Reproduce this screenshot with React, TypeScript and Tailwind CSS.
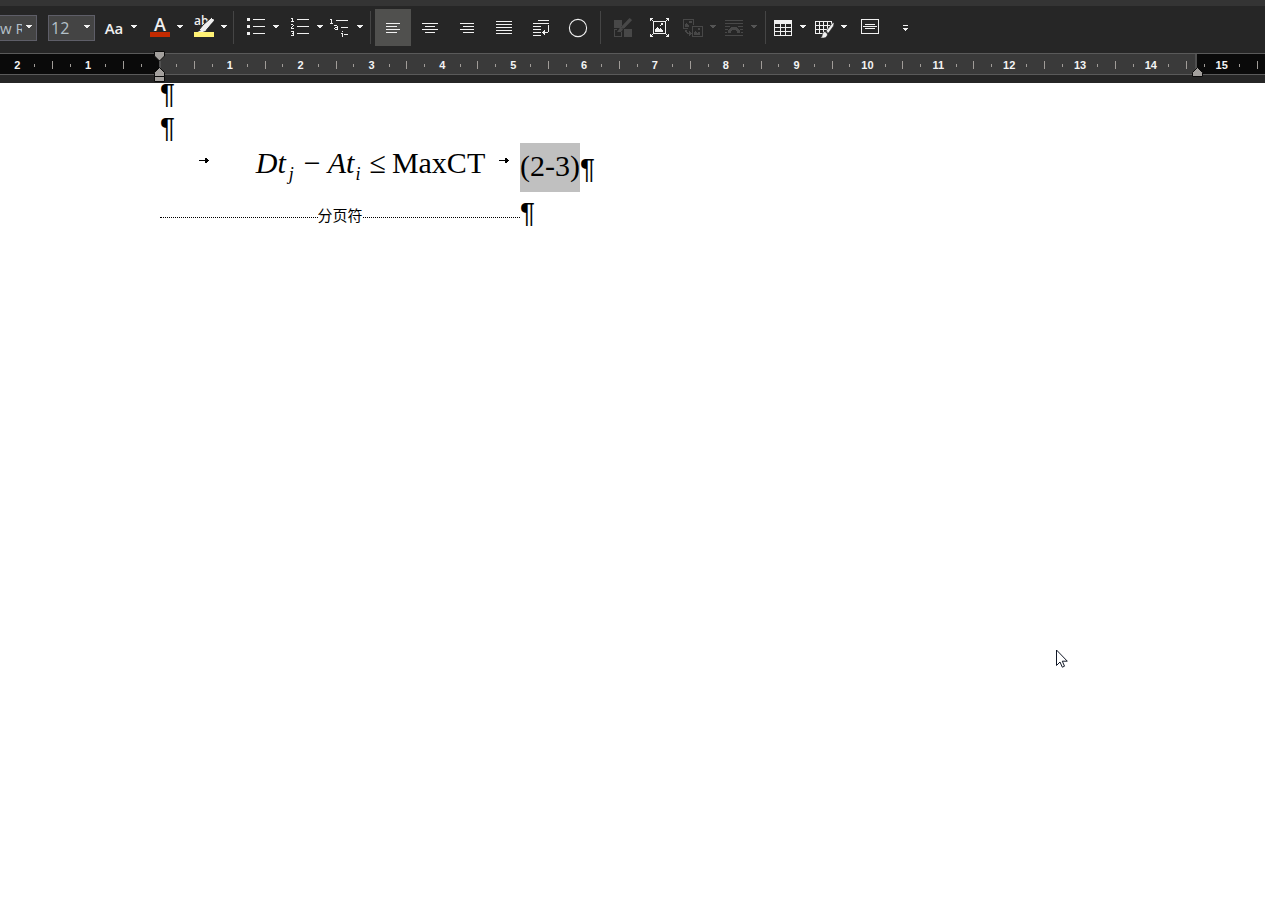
import type { ReactNode } from "react";

function Caret({ disabled = false }: { disabled?: boolean }) {
  return (
    <svg
      className={disabled ? "h-[25px] w-[7px] text-[#555555]" : "h-[25px] w-[7px] text-[#f0f0f0]"}
      viewBox="0 0 7 25"
      shapeRendering="crispEdges"
      aria-hidden="true"
    >
      <path d="M0 10h6v1h-1v1h-1v1h-2v-1h-1v-1h-1z" fill="currentColor" />
    </svg>
  );
}

function Icon({ children, crisp = true }: { children: ReactNode; crisp?: boolean }) {
  return (
    <svg
      className="h-[25px] w-5 shrink-0 overflow-visible"
      viewBox="0 0 20 25"
      fill="currentColor"
      shapeRendering={crisp ? "crispEdges" : "auto"}
      aria-hidden="true"
    >
      {children}
    </svg>
  );
}

function SplitButton({ label, children, disabled = false }: { label: string; children: ReactNode; disabled?: boolean }) {
  return (
    <button
      type="button"
      aria-label={label}
      disabled={disabled}
      className="flex h-[37px] w-10 shrink-0 items-center justify-between px-[3px] text-[#f0f0f0] disabled:text-[#484848]"
    >
      {children}
      <Caret disabled={disabled} />
    </button>
  );
}

function ToolButton({
  label,
  children,
  active = false,
  disabled = false,
}: {
  label: string;
  children: ReactNode;
  active?: boolean;
  disabled?: boolean;
}) {
  return (
    <button
      type="button"
      aria-label={label}
      aria-pressed={active}
      disabled={disabled}
      className={
        active
          ? "flex h-[37px] w-9 shrink-0 items-center justify-center bg-[#50504e] text-[#f0f0f0]"
          : "flex h-[37px] w-9 shrink-0 items-center justify-center text-[#f0f0f0] disabled:text-[#484848]"
      }
    >
      {children}
    </button>
  );
}

function Separator() {
  return <div className="h-[33px] w-px shrink-0 bg-[#454545]" />;
}

function Lines({ rows }: { rows: [number, number, number][] }) {
  return (
    <>
      {rows.map(([x, y, w]) => (
        <rect key={y} x={x} y={y} width={w} height="1" />
      ))}
    </>
  );
}

function Toolbar() {
  return (
    <div role="toolbar" aria-label="Formatting" className="flex h-[47px] items-center bg-[#262626] pb-[7px] pt-[3px] font-['Open_Sans',sans-serif]">
      <div className="relative flex shrink-0">
        <select
          aria-label="Font"
          className="h-[26px] w-[37px] appearance-none border border-l-0 border-[#5e5e68] bg-[#444444] pr-[14px] text-[15px] leading-6 text-[#b4c0c8]"
        >
          <option>w R</option>
        </select>
        <div className="pointer-events-none absolute right-1 top-0">
          <Caret />
        </div>
      </div>
      <div className="relative ml-[11px] flex shrink-0">
        <select
          aria-label="Font size"
          className="h-[26px] w-[47px] appearance-none border border-[#5e5e68] bg-[#444444] pl-[2px] text-[16px] leading-6 text-[#b4c0c8]"
        >
          <option>12</option>
        </select>
        <div className="pointer-events-none absolute right-1 top-0">
          <Caret />
        </div>
      </div>
      <div className="ml-[6px] flex gap-x-1">
        <div className="pr-[2px]">
          <SplitButton label="Change case">
            <span className="w-5 text-center text-[15px] font-semibold leading-6">Aa</span>
          </SplitButton>
        </div>
        <SplitButton label="Font colour">
          <Icon>
            <text x="10" y="16" textAnchor="middle" fontSize="18" fontWeight="600">A</text>
            <rect y="17" width="20" height="5" fill="#c22a00" />
          </Icon>
        </SplitButton>
        <SplitButton label="Text highlight">
          <Icon crisp={false}>
            <text x="0" y="10" fontSize="12" fontWeight="600">ab</text>
            <path d="M17.500 2.500L20 5L11 17L5 15L9 10z" stroke="#262626" strokeWidth="1" />
            <path d="M17 4.500L19.500 4L20 5.500L12.500 14L10 11.500Z" />
            <path d="M9 12l3 3L9 17H3.500l3-1.500z" />
            <rect y="17" width="20" height="5" fill="#fff275" />
          </Icon>
        </SplitButton>
      </div>
      <div className="ml-[2px] flex items-center">
        <Separator />
        <div className="ml-[9px] flex">
          <SplitButton label="Bullets">
            <Icon>
              {[3, 10, 17].map((y) => (
                <rect key={y} x="1" y={y} width="3" height="3" />
              ))}
              <Lines rows={[[7, 4, 12], [7, 11, 12], [7, 18, 12]]} />
            </Icon>
          </SplitButton>
        </div>
        <div className="ml-1 flex">
          <SplitButton label="Numbering">
            <Icon>
              <path d="M1 3h2v3h1v1h-3v-1h1v-2h-1z" />
              <path d="M1 9h2v1h1v1h-1v1h-1v1h2v1h-3v-2h1v-1h1v-1h-2z" />
              <path d="M1 16h3v5h-3v-1h2v-1h-1v-1h1v-1h-2z" />
              <Lines rows={[[7, 4, 12], [7, 11, 12], [7, 18, 12]]} />
            </Icon>
          </SplitButton>
          <SplitButton label="Multilevel list">
            <Icon>
              <path d="M0 4h2v4h1v1h-3v-1h1v-3h-1z" />
              <path d="M4 10h3v1h1v4h-3v-1h-1v-1h1v-1h2v-1h-3zM5 13v1h2v-1z" fillRule="evenodd" />
              <path d="M12 16h1v1h-1zM11 18h2v4h-1v-3h-1z" />
              <Lines rows={[[6, 5, 12], [11, 12, 7], [14, 19, 4]]} />
            </Icon>
          </SplitButton>
        </div>
      </div>
      <div className="ml-[3px] flex items-center">
        <Separator />
        <div className="ml-1 flex gap-x-px">
          <ToolButton label="Align left" active>
            <Icon>
              <Lines rows={[[3, 8, 14], [3, 11, 11], [3, 14, 14], [3, 17, 11]]} />
            </Icon>
          </ToolButton>
          <ToolButton label="Centre">
            <Icon>
              <Lines rows={[[2, 8, 16], [5, 11, 10], [2, 14, 16], [5, 17, 10]]} />
            </Icon>
          </ToolButton>
          <ToolButton label="Align right">
            <Icon>
              <Lines rows={[[3, 8, 14], [6, 11, 11], [3, 14, 14], [6, 17, 11]]} />
            </Icon>
          </ToolButton>
          <ToolButton label="Justify">
            <Icon>
              <Lines rows={[[2, 6, 16], [2, 9, 16], [2, 12, 16], [2, 15, 16], [2, 18, 16]]} />
            </Icon>
          </ToolButton>
          <ToolButton label="Text direction">
            <Icon>
              <Lines rows={[[7, 5, 11], [2, 8, 16], [2, 11, 8], [2, 14, 8], [2, 17, 8], [2, 20, 8]]} />
              <path d="M17 10h1v7h-1v1h-3v2h-1v-1h-1v-1h-1v-1h1v-1h1v-1h1v2h3z" />
            </Icon>
          </ToolButton>
          <ToolButton label="Shape">
            <Icon crisp={false}>
              <circle cx="10" cy="13" r="8.600" fill="none" stroke="currentColor" strokeWidth="1.100" />
            </Icon>
          </ToolButton>
        </div>
      </div>
      <div className="ml-1 flex items-center">
        <Separator />
        <div className="ml-[3px] flex gap-x-px">
          <ToolButton label="Styles" disabled>
            <Icon crisp={false}>
              <path d="M2 5h8v8h-8zM12 14h8v8h-8zM2 14h3v1h-2v6h6v-4h1v5h-8z" />
              <path d="M18 3.500L20 5.500L12 14L9.500 11.500Z" stroke="#262626" />
              <path d="M17.500 3L20 5L11 14L9 12ZM8.500 12l2.500 2.500L9 17H5z" />
            </Icon>
          </ToolButton>
          <ToolButton label="Picture">
            <Icon>
              <path d="M4 6h13v13h-13zM5 7v11h11v-11z" fillRule="evenodd" />
              <path d="M6 17v-3h1v-1h1v-1h1v1h1v1h1v-1h1v1h1v1h1v2zM12 8h2v2h-2zM11 10h1v1h-1z" />
              <path d="M1 3h3v1h-1v1h1v1h-1v-1h-1v1h-1zM17 3h3v3h-1v-1h-1v1h-1v-1h1v-1h-1zM1 19h1v1h1v-1h1v1h-1v1h1v1h-3zM19 19h1v3h-3v-1h1v-1h-1v-1h1v1h1z" />
            </Icon>
          </ToolButton>
        </div>
        <div className="ml-[3px] flex gap-x-px">
          <SplitButton label="Change picture" disabled>
            <Icon>
              <path d="M0 4h11v6h-1v-5h-9v8h4v1h-5zM9 11h11v11h-11zM10 12v9h9v-9z" fillRule="evenodd" />
              <path d="M2 12v-3h1v-1h1v1h1v1h1v2zM6 6h3v2h-3zM11 20v-3h1v-1h1v1h1v1h1v-1h2v3zM15 13h2v2h-2z" />
              <path d="M2 15h2v2h1v1h1v-2h1v1h1v1h1v1h-1v1h-1v1h-1v-2h-2v-1h-1v-1h-1z" />
            </Icon>
          </SplitButton>
          <SplitButton label="Wrap text" disabled>
            <Icon>
              <path d="M1 5h18v1h-18zM1 8h18v1h-18zM1 11h5v1h-5zM14 11h5v1h-5zM1 14h3v1h-3zM16 14h3v1h-3zM1 17h2v1h-2zM17 17h2v1h-2zM1 20h18v1h-18z" />
              <path d="M4 18a6 6.500 0 0 1 12 0h-3a3 3.500 0 0 0-6 0z" />
            </Icon>
          </SplitButton>
        </div>
      </div>
      <div className="ml-1 flex items-center">
        <Separator />
        <div className="ml-1 flex gap-x-px">
          <SplitButton label="Insert table">
            <Icon>
              <path d="M1 5h18v16h-18zM2 9v3h5v-3zM8 9v3h4v-3zM13 9v3h5v-3zM2 13v3h5v-3zM8 13v3h4v-3zM13 13v3h5v-3zM2 17v3h5v-3zM8 17v3h4v-3zM13 17v3h5v-3z" fillRule="evenodd" />
            </Icon>
          </SplitButton>
          <SplitButton label="Draw table">
            <Icon crisp={false}>
              <path d="M1 6h17v13h-17zM2 7v3h3v-3zM6 7v3h3v-3zM10 7v3h3v-3zM14 7v3h3v-3zM2 11v3h3v-3zM6 11v3h3v-3zM10 11v3h3v-3zM14 11v3h3v-3zM2 15v3h3v-3zM6 15v3h3v-3zM10 15v3h3v-3zM14 15v3h3v-3z" fillRule="evenodd" />
              <path d="M20 9v12h-9z" fill="#262626" />
              <path d="M19 7.500L20 8.500L19.500 11L14.500 18L12 16ZM11 16.500l2.500 2.500c0 2-1.500 4-4 4H6c1.500-.5 2-1.500 2.200-3 .3-1.800 1.300-3 2.800-3.500z" stroke="#262626" strokeWidth=".6" />
            </Icon>
          </SplitButton>
          <ToolButton label="New comment">
            <Icon>
              <path d="M1 4h18v15h-18zM2 5v13h16v-13z" fillRule="evenodd" />
              <Lines rows={[[5, 9, 10], [3, 11, 14], [5, 13, 10]]} />
            </Icon>
          </ToolButton>
          <button type="button" aria-label="More commands" className="flex h-[37px] w-8 items-center justify-center text-[#f0f0f0]">
            <Icon>
              <path d="M8 10h5v1h-5zM8 13h5v1h-1v1h-1v1h-1v-1h-1v-1h-1z" />
            </Icon>
          </button>
        </div>
      </div>
    </div>
  );
}

function RulerMark({ index }: { index: number }) {
  const quarter = index - 10;
  if (quarter === 0) return <span />;
  if (quarter % 4 === 0) {
    return <span className="text-center text-[11px] font-bold leading-4 text-[#f4f4f4]">{Math.abs(quarter / 4)}</span>;
  }
  return <span className={quarter % 2 === 0 ? "h-2 w-px bg-[#a09c98]" : "h-[3px] w-px bg-[#a09c98]"} />;
}

function Ruler() {
  return (
    <div className="relative bg-[#262626] pb-2 font-['Liberation_Sans',Arial,sans-serif]">
      <div className="grid overflow-hidden border-y border-[#5a5a5a]">
        <div className="col-start-1 row-start-1 flex h-5">
          <div className="w-[159px] bg-[#0a0a0a]" />
          <div className="w-[1038px] border-x-2 border-[#505050] bg-[#3a3a3a]" />
          <div className="flex-1 bg-[#0a0a0a]" />
        </div>
        <div className="col-start-1 row-start-1 -ml-[27px] flex w-0 overflow-visible">
          <div className="grid w-[1293px] shrink-0 grid-cols-[repeat(73,minmax(0,1fr))] place-items-center pt-[2px]">
            {Array.from({ length: 73 }, (_, i) => (
              <RulerMark key={i} index={i} />
            ))}
          </div>
        </div>
      </div>
      <svg className="absolute -top-[2px] left-[154px] h-8 w-[11px]" viewBox="0 0 11 32" fill="#a3a09d" stroke="#0a0a0a" aria-hidden="true">
        <path d="M.5 .5h10v4.500l-5 5l-5-5z" />
        <path d="M.5 25.500v-4l5-5l5 5v4zM.5 25.500h10v5h-10z" />
      </svg>
      <svg className="absolute left-[1192px] top-[14px] h-[10px] w-[11px]" viewBox="0 0 11 10" fill="#a3a09d" stroke="#0a0a0a" aria-hidden="true">
        <path d="M.5 9.500v-4l5-5l5 5v4z" />
      </svg>
    </div>
  );
}

function TabArrow() {
  return (
    <svg className="h-[7px] w-[10px] shrink-0" viewBox="0 0 10 7" shapeRendering="crispEdges" aria-hidden="true">
      <path d="M0 3h6v-2h2v1h1v1h1v1h-1v1h-1v1h-2v-2h-6z" />
    </svg>
  );
}

function Document() {
  return (
    <main className="flex-1 bg-white pl-40 font-['Liberation_Serif','Times_New_Roman',serif] text-[30px] text-black">
      <p className="font-['Liberation_Sans',Arial,sans-serif] text-[28px] leading-[22px]">¶</p>
      <p className="mt-3 font-['Liberation_Sans',Arial,sans-serif] text-[28px] leading-[22px]">¶</p>
      <div className="mt-1 flex h-[49px] whitespace-nowrap">
        <div className="flex w-[360px] justify-between pl-[39px] pr-[11px]">
          <div className="pt-[14px]">
            <TabArrow />
          </div>
          <div className="ml-[33px] flex items-baseline leading-[40px]">
            <i>Dt</i>
            <i className="relative top-[7px] ml-[3px] text-[18px]">j</i>
            <span className="ml-[10px]">−</span>
            <i className="ml-[7px]">At</i>
            <i className="relative top-[7px] ml-px text-[18px]">i</i>
            <span className="ml-[9px]">≤</span>
            <span className="ml-[6px]">MaxCT</span>
          </div>
          <div className="pt-[14px]">
            <TabArrow />
          </div>
        </div>
        <span className="bg-[#c0c0c0] leading-[46px]">(2-3)</span>
        <span className="font-['Liberation_Sans',Arial,sans-serif] text-[28px] leading-[52px]">¶</span>
      </div>
      <div className="flex h-10">
        <div className="flex w-[360px] items-center pt-[6px]">
          <span className="mt-1 h-px flex-1 border-t border-dotted border-black" />
          <span className="font-['Noto_Sans_CJK_SC',sans-serif] text-[15px] leading-5">分页符</span>
          <span className="mt-1 h-px flex-1 border-t border-dotted border-black" />
        </div>
        <span className="font-['Liberation_Sans',Arial,sans-serif] text-[28px] leading-[42px]">¶</span>
      </div>
    </main>
  );
}

export default function App() {
  return (
    <div className="relative flex min-h-screen flex-col bg-white">
      <div className="h-[6px] bg-[#343434]" />
      <Toolbar />
      <Ruler />
      <Document />
      <svg className="absolute left-[1056px] top-[649px] h-5 w-3" viewBox="0 0 12 20" fill="#fff" stroke="#111827" aria-hidden="true">
        <path d="M.5 1v15.500l3.500-3.500l2.300 5.200l2.200-1l-2.200-5h5z" />
      </svg>
    </div>
  );
}
